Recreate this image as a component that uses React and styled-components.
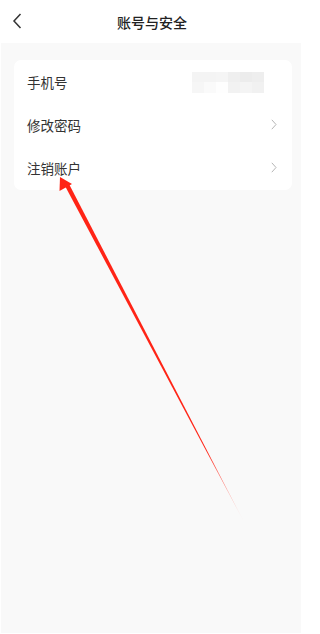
import React from "react";
import styled, { createGlobalStyle } from "styled-components";

const GlobalStyle = createGlobalStyle`
  html, body {
    margin: 0;
    padding: 0;
    background: #fff;
  }
  body {
    font-family: "Noto Sans CJK SC", "Noto Sans", sans-serif;
  }
`;

const Page = styled.div`
  position: relative;
  width: 302px;
  height: 634px;
  display: flex;
  flex-direction: column;
  background: #fff;
  overflow: hidden;
`;

const Header = styled.div`
  height: 43px;
  flex-shrink: 0;
  display: flex;
  align-items: center;
  justify-content: center;
  position: relative;
`;

const BackBtn = styled.div`
  position: absolute;
  left: 12px;
  top: 13px;
  width: 12px;
  height: 16px;
  display: flex;
`;

const Title = styled.div`
  font-size: 14px;
  font-weight: 500;
  color: #222;
  margin-left: 2px;
`;

const Main = styled.div`
  flex: 1;
  margin: 0 1px 1px 1px;
  background: #f9f9f9;
  padding: 17px 9px 0 13px;
`;

const Card = styled.div`
  background: #fff;
  border-radius: 7px;
  padding: 0 15px 1px 13px;
`;

const Row = styled.div`
  height: 43px;
  display: flex;
  align-items: center;
  justify-content: space-between;
`;

const Label = styled.span`
  font-size: 13.5px;
  color: #333;
`;

const Mosaic = styled.div`
  display: grid;
  grid-template-columns: repeat(6, 12px);
  grid-template-rows: 10px 11px;
  margin-right: 13px;
  margin-top: 2px;
`;

const Cell = styled.div`
  background: ${(p) => p.$c};
`;

const Arrow = styled.svg`
  position: absolute;
  left: 0;
  top: 0;
  pointer-events: none;
`;

const mosaicColors = [
  "#f4f4f4", "#f4f4f4", "#f5f5f5", "#efefef", "#ececec", "#eeeeee",
  "#f6f6f6", "#fafafa", "#fefefe", "#f2f2f2", "#f4f4f4", "#f1f1f1",
];

const Chevron = () => (
  <svg width="6" height="11" viewBox="0 0 6 11">
    <path d="M0.8 0.8 L5 5.5 L0.8 10.2" fill="none" stroke="#b5b5b5" strokeWidth="1" />
  </svg>
);

function App() {
  return (
    <>
      <GlobalStyle />
      <Page>
        <Header>
          <BackBtn>
            <svg width="12" height="16" viewBox="0 0 12 16">
              <path d="M8.5 1 L2 8 L8.5 15" fill="none" stroke="#333" strokeWidth="1.5" />
            </svg>
          </BackBtn>
          <Title>账号与安全</Title>
        </Header>
        <Main>
          <Card>
            <Row>
              <Label>手机号</Label>
              <Mosaic>
                {mosaicColors.map((c, i) => (
                  <Cell key={i} $c={c} />
                ))}
              </Mosaic>
            </Row>
            <Row>
              <Label>修改密码</Label>
              <Chevron />
            </Row>
            <Row>
              <Label>注销账户</Label>
              <Chevron />
            </Row>
          </Card>
        </Main>
        <Arrow width="302" height="634" viewBox="0 0 302 634">
          <defs>
            <linearGradient id="tail" x1="60" y1="177" x2="243" y2="520" gradientUnits="userSpaceOnUse">
              <stop offset="0" stopColor="#ff2416" />
              <stop offset="0.8" stopColor="#ff2416" />
              <stop offset="1" stopColor="#ff2416" stopOpacity="0.1" />
            </linearGradient>
          </defs>
          <polygon points="64.5,185 68.5,183 243,520" fill="url(#tail)" />
          <polygon points="60,177 72,184 59.5,191" fill="#ff2416" />
        </Arrow>
      </Page>
    </>
  );
}

export default App;
